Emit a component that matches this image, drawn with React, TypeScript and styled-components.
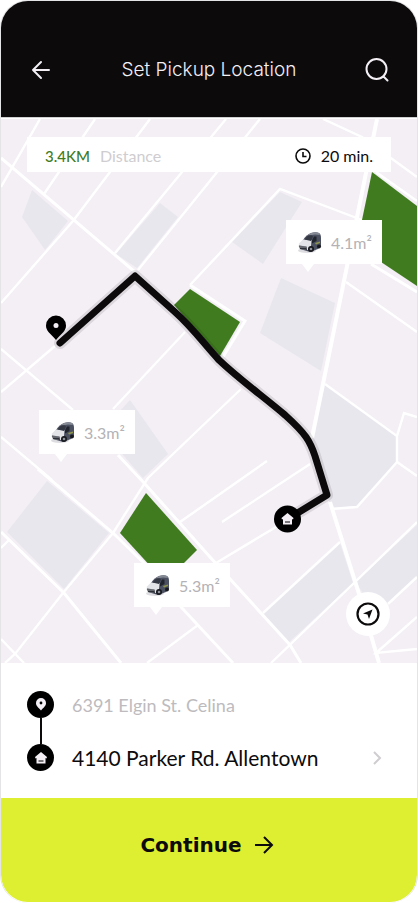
import React from "react";
import styled, { createGlobalStyle } from "styled-components";

const MAP_W = 416;
const MAP_H = 544;

const GlobalStyle = createGlobalStyle`
  *, *::before, *::after { box-sizing: border-box; }
  body {
    margin: 0;
    background: #fff;
    font-family: Lato, "Noto Sans", sans-serif;
    color: #0c0b0c;
  }
  button {
    border: 0;
    padding: 0;
    background: none;
    font: inherit;
    color: inherit;
    cursor: pointer;
  }
  svg { display: block; }
`;

const Screen = styled.main`
  display: flex;
  flex-direction: column;
  min-height: 100vh;
  padding-bottom: 1px;
  border: 1px solid #e4e3e6;
  border-bottom: 0;
  border-radius: 28px;
  overflow: hidden;
  background: #fff;
`;

const Header = styled.header`
  display: flex;
  align-items: center;
  justify-content: space-between;
  height: 117px;
  margin-bottom: 1px;
  padding: 22px 27px 0;
  border-bottom: 1px solid #d0cfd1;
  background: #0c0a0b;
  color: #f3eff5;
`;

const Title = styled.h1`
  margin: 0;
  font-family: Inter, sans-serif;
  font-size: 19px;
  line-height: 24px;
  font-weight: 300;
`;

const IconButton = styled.button`
  display: grid;
  place-items: center;
  width: 26px;
  height: 26px;
`;

const MapArea = styled.section`
  position: relative;
  aspect-ratio: ${MAP_W} / ${MAP_H};
  background: #f3eff5;
  overflow: hidden;
`;

const MapDrawing = styled.svg`
  width: 100%;
  height: 100%;
`;

const TripBar = styled.div`
  position: absolute;
  top: 18px;
  left: 26px;
  right: 26px;
  display: flex;
  align-items: center;
  gap: 10px;
  height: 35px;
  padding: 2px 18px 0;
  background: #fff;
  font-size: 16px;
  line-height: 20px;
`;

const Distance = styled.strong`
  font-size: 15px;
  font-weight: 500;
  color: #407c1f;
`;

const Muted = styled.span`
  color: #cfcdd0;
`;

const Duration = styled.span`
  display: flex;
  align-items: center;
  gap: 10px;
  margin-left: auto;
`;

const VanLabel = styled.div<{ $x: number; $y: number }>`
  position: absolute;
  left: calc(100% * ${(p) => p.$x} / ${MAP_W});
  top: calc(100% * ${(p) => p.$y} / ${MAP_H});
  display: flex;
  align-items: center;
  gap: 8px;
  width: 96px;
  height: 44px;
  padding: 2px 0 0 11px;
  background: #fff;
  color: #b4b2b5;
  font-size: 16px;
  line-height: 20px;

  &::after {
    content: "";
    position: absolute;
    top: 100%;
    left: 16px;
    border: 6px solid transparent;
    border-top: 8px solid #fff;
    border-bottom: 0;
  }
`;

const LocateButton = styled.button`
  position: absolute;
  right: 27px;
  bottom: 27px;
  display: grid;
  place-items: center;
  width: 44px;
  height: 44px;
  border-radius: 50%;
  background: #fff;
`;

const Trip = styled.section`
  display: grid;
  grid-template-columns: 27px 1fr;
  column-gap: 18px;
  align-items: center;
  padding: 28px 33px 27px 26px;
`;

const StopIcon = styled.span`
  display: grid;
  place-items: center;
  width: 27px;
  height: 27px;
  border-radius: 50%;
  background: #000;
`;

const Connector = styled.span`
  grid-column: 1;
  justify-self: center;
  width: 2px;
  height: 26px;
  background: #0c0a0b;
`;

const Origin = styled.span`
  font-size: 18px;
  line-height: 26px;
  color: #bdbbbe;
`;

const DestinationIcon = styled(StopIcon)`
  grid-column: 1;
`;

const Destination = styled.button`
  grid-column: 2;
  display: flex;
  align-items: center;
  justify-content: space-between;
  font-size: 21px;
  line-height: 27px;
  text-align: left;
`;

const Continue = styled.button`
  flex: 1;
  display: flex;
  align-items: center;
  justify-content: center;
  gap: 12px;
  min-height: 104px;
  padding: 0 4px 11px 0;
  border-radius: 0 0 27px 27px;
  background: #deee30;
  font-family: "DejaVu Sans", sans-serif;
  font-size: 20px;
  line-height: 24px;
  font-weight: 700;
`;

function Van() {
  return (
    <svg width="26" height="22" viewBox="0 0 26 22" aria-hidden="true">
      <ellipse cx="10" cy="18.500" rx="9" ry="2.400" fill="#dddce0" />
      <path d="M6 8 Q9 3 14 1 Q19-.5 22 1 Q24 2 24 6V14L21 17 13 20 3 17Z" fill="#4c5162" />
      <path d="M9 4 14 1 Q19-.5 22 1L23 3 18 2.500Z" fill="#858a95" />
      <path d="M2 11.500 6 7.500 14.500 8 14 14 11 18 3 17 1.500 14.500Z" fill="#e2e4e8" />
      <path d="M7.500 7.500 11 3.500 Q15 2.500 16 4.500L14 9Z" fill="#343843" />
      <path d="M15 8.500 17 4.500H19.500V9L15 11.500Z" fill="#20242d" />
      <path d="M2 13.500 9.500 14.500 10 18 3 17Z" fill="#2d3036" />
      <path d="M3 15H9" stroke="#9da0a7" strokeWidth="1" />
      <path d="M18 11 23 9.500V11L19 12.500Z" fill="#8f9549" />
      <circle cx="14" cy="17" r="3" fill="#17191e" />
      <circle cx="14" cy="17" r="1.300" fill="#8d9099" />
      <circle cx="22" cy="14.500" r="2" fill="#17191e" />
    </svg>
  );
}

function HomeGlyph() {
  return (
    <>
      <path d="M6 0 12 5 11.500 6.500 10.500 6V11.500H1.500V6L.5 6.500 0 5Z" fill="#f3eff5" />
      <path d="M3.500 9H8.500" stroke="#000" strokeWidth="1" />
    </>
  );
}

const blocks = [
  "32,190 68,221 45,250 22,217",
  "160,203 178,217 137,268 116,254",
  "280,192 302,202 263,264 232,242",
  "281,278 335,303 321,371 260,333",
  "130,400 168,454 143,478 110,440 118,413",
  "325,385 397,436 397,462 356,506 331,508 312,438",
  "47,481 109,533 64,589 7,532",
  "340,543 353,583 288,643 263,613",
  "417,525 417,577 388,603 370,605 356,582",
];

const streets = [
  "M40 119 1 187",
  "M95 119 44 194",
  "M150 119 110 172 73 221 1 303",
  "M226 119 115 253",
  "M260 119 138 270",
  "M323 119 362 137 417 177",
  "M376 172 417 201",
  "M190 285 280 189 362 220",
  "M346 282 417 332",
  "M1 392 55 346",
  "M185 332 113 409",
  "M1 548 9 540",
  "M1 639 24 663",
  "M180 522 210 501 267 461",
  "M222 522 310 464",
  "M216 563 276 527",
  "M263 613 340 542",
  "M271 663 354 583 417 522",
  "M388 604 417 577",
  "M417 617 376 653 417 649",
  "M331 509 357 507 397 462V436L325 384",
  "M397 436 404 413 417 417",
  "M397 462 417 476",
  "M147 663 198 625",
  "M241 389 148 478 113 533 63 593 15 654 5 663",
  "M1 349 73 410",
  "M1 437 52 480",
];

const avenues = [
  "M190 285 245 321 223 357",
  "M371 264 417 292",
  "M1 158 135 272",
  "M118 455 145 484 210 557 290 645 301 663",
  "M38 469 113 533 147 566 182 608 233 663",
  "M1 532 64 593 121 663",
];

const route =
  "M60 343 135 276 175 312C192 327 205 345 219 360C240 380 264 397 285 415C306 434 310 441 315 456L327 495 291 517";

function CityMap() {
  return (
    <MapDrawing viewBox={`1 119 ${MAP_W} ${MAP_H}`} role="img" aria-label="Route map">
      {blocks.map((points) => (
        <polygon key={points} points={points} fill="#e9e7ee" />
      ))}
      <g fill="none" stroke="#fff" strokeWidth="2.400">
        {streets.map((d) => (
          <path key={d} d={d} />
        ))}
      </g>
      <g fill="none" stroke="#fff" strokeWidth="3">
        {avenues.map((d) => (
          <path key={d} d={d} />
        ))}
      </g>
      <path d="M377 119 312 438M330 502 360 597 379 663" fill="none" stroke="#fff" strokeWidth="4" />
      <g fill="#407c1f">
        <polygon points="372,172 417,206 417,286 381,262 362,220" />
        <polygon points="190,289 240,322 220,356 174,305" />
        <polygon points="146,493 197,550 178,569 153,569 120,533" />
      </g>
      <g fill="none" strokeLinecap="round" strokeLinejoin="round">
        <path d={route} stroke="#0c0a0b" strokeOpacity=".1" strokeWidth="12" />
        <path d={route} stroke="#0c0a0b" strokeWidth="7" />
      </g>
      <path d="M56 340C50 333 46 331 46 325.500A10 10 0 0 1 66 325.500C66 331 62 333 56 340Z" fill="#000" />
      <circle cx="56" cy="325.500" r="2.500" fill="#f3eff5" />
      <circle cx="287.500" cy="519" r="13.500" fill="#000" />
      <g transform="translate(281.500 513)">
        <HomeGlyph />
      </g>
    </MapDrawing>
  );
}

const vans = [
  { area: "4.1m²", x: 285, y: 101 },
  { area: "3.3m²", x: 38, y: 291 },
  { area: "5.3m²", x: 133, y: 444 },
];

export default function App() {
  return (
    <>
      <GlobalStyle />
      <Screen>
        <Header>
          <IconButton type="button" aria-label="Back">
            <svg width="20" height="20" viewBox="0 0 20 20" fill="none" stroke="currentColor" strokeWidth="2" strokeLinecap="round" strokeLinejoin="round">
              <path d="M18 10H2M10 2 2 10 10 18" />
            </svg>
          </IconButton>
          <Title>Set Pickup Location</Title>
          <IconButton type="button" aria-label="Search">
            <svg width="26" height="26" viewBox="0 0 26 26" fill="none" stroke="currentColor" strokeWidth="2" strokeLinecap="round">
              <circle cx="12.500" cy="12" r="10" />
              <path d="M19.500 19.500 23.500 23.500" />
            </svg>
          </IconButton>
        </Header>

        <MapArea>
          <CityMap />
          <TripBar>
            <Distance>3.4KM</Distance>
            <Muted>Distance</Muted>
            <Duration>
              <svg width="16" height="16" viewBox="0 0 16 16" fill="none" stroke="currentColor" strokeWidth="1.600" aria-hidden="true">
                <circle cx="8" cy="8" r="7" />
                <path d="M8 4V8.500H11.500" />
              </svg>
              20 min.
            </Duration>
          </TripBar>
          {vans.map((van) => (
            <VanLabel key={van.area} $x={van.x} $y={van.y}>
              <Van />
              {van.area}
            </VanLabel>
          ))}
          <LocateButton type="button" aria-label="Show my location">
            <svg width="24" height="24" viewBox="0 0 24 24" fill="none">
              <circle cx="12" cy="12" r="10.500" stroke="#0c0a0b" strokeWidth="2.200" />
              <path d="M16.500 7.500 13 17 11.500 12.500 7 11.500Z" fill="#0c0a0b" />
            </svg>
          </LocateButton>
        </MapArea>

        <Trip>
          <StopIcon>
            <svg width="10" height="13" viewBox="0 0 10 13" aria-hidden="true">
              <path d="M5 12.500C2 9 0 8 0 5A5 5 0 0 1 10 5C10 8 8 9 5 12.500Z" fill="#f3eff5" />
              <circle cx="5" cy="5" r="1.400" fill="#000" />
            </svg>
          </StopIcon>
          <Origin>6391 Elgin St. Celina</Origin>
          <Connector />
          <DestinationIcon>
            <svg width="12" height="12" viewBox="0 0 12 12" aria-hidden="true">
              <HomeGlyph />
            </svg>
          </DestinationIcon>
          <Destination type="button">
            4140 Parker Rd. Allentown
            <svg width="12" height="16" viewBox="0 0 12 16" fill="none" stroke="#cfcdd0" strokeWidth="2" aria-hidden="true">
              <path d="M2 2 8 8 2 14" />
            </svg>
          </Destination>
        </Trip>

        <Continue type="button">
          Continue
          <svg width="20" height="20" viewBox="0 0 20 20" fill="none" stroke="currentColor" strokeWidth="2" aria-hidden="true">
            <path d="M1 10H18M10 2 18 10 10 18" />
          </svg>
        </Continue>
      </Screen>
    </>
  );
}
